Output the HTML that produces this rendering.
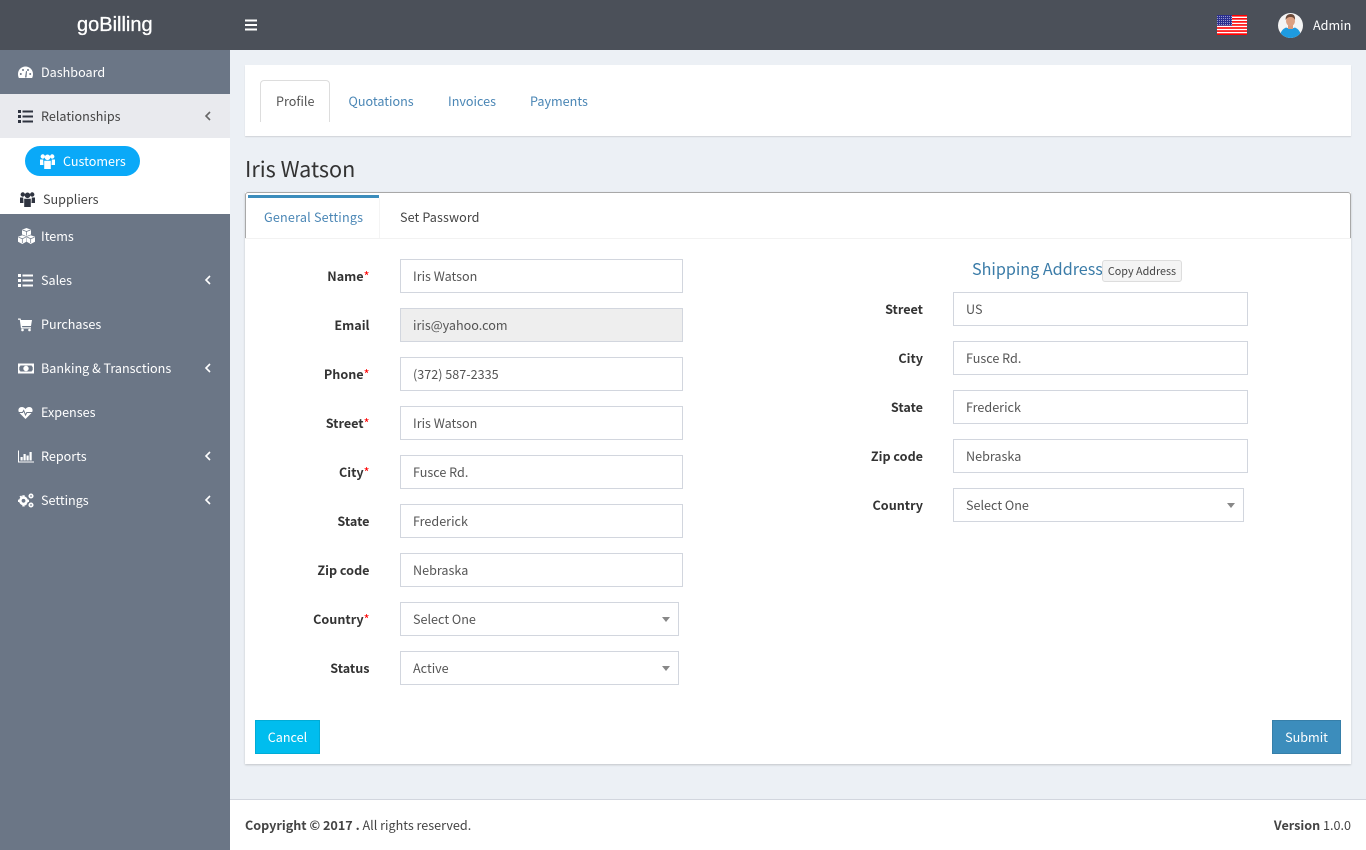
<!DOCTYPE html>
<html><head><meta charset="utf-8"><title>goBilling</title>
<style>
*{box-sizing:border-box}
html,body{margin:0;padding:0;width:1366px;height:850px;overflow:hidden;background:#ecf0f5}
body{position:relative;font-family:"Noto Sans CJK JP","Liberation Sans",sans-serif;font-size:12.6px;color:#333}
.a{position:absolute}
.t{position:absolute;white-space:nowrap;line-height:20px;height:20px}
.nav{position:absolute;left:41px;color:#fff;white-space:nowrap;line-height:20px;font-size:12.6px}
.ic{position:absolute;left:18px;width:15px;height:15px;fill:#fff}
.ch{position:absolute;left:204px;width:8px;height:10px;fill:none;stroke:#fff;stroke-width:1.6}
.lbl{position:absolute;text-align:right;font-weight:700;line-height:20px;white-space:nowrap;color:#333}
.lbl i{color:#f00;font-style:normal;font-weight:400}
.in{position:absolute;height:34px;border:1px solid #d2d6de;background:#fff;line-height:32px;padding-left:12px;color:#555;white-space:nowrap}
.ar{position:absolute;right:8px;top:14px;width:0;height:0;border-left:4px solid transparent;border-right:4px solid transparent;border-top:5px solid #888}
</style></head><body>

<!-- header -->
<div class="a" style="left:0;top:0;width:1366px;height:50px;background:#4b5059"></div>
<div class="t" style="left:77px;top:13px;height:24px;font:20px/24px 'Liberation Sans',sans-serif;color:#fff;-webkit-text-stroke:.3px #fff">goBilling</div>
<svg class="a" style="left:245px;top:19px" width="12" height="12"><path d="M0 1.500h12M0 6h12M0 10.500h12" stroke="#fff" stroke-width="2"/></svg>

<!-- flag -->
<svg class="a" style="left:1217px;top:15px" width="30" height="20" viewBox="0 0 30 20">
<rect width="30" height="20" fill="#fff"/>
<g fill="#f00"><rect width="30" height="1.600"/><rect y="3.050" width="30" height="1.600"/><rect y="6.100" width="30" height="1.600"/><rect y="9.150" width="30" height="1.600"/><rect y="12.200" width="30" height="1.600"/><rect y="15.250" width="30" height="1.600"/><rect y="18.300" width="30" height="1.700"/></g>
<rect width="15" height="10.700" fill="#2a2f8f"/>
<g stroke="#b9bce0" stroke-width=".8" stroke-dasharray="1 1"><path d="M0 1.500h15M0 3.500h15M0 5.500h15M0 7.500h15M0 9.500h15"/></g>
</svg>
<!-- avatar -->
<svg class="a" style="left:1278px;top:13px" width="25" height="25" viewBox="0 0 25 25">
<defs><clipPath id="c"><circle cx="12.500" cy="12.500" r="12.500"/></clipPath></defs>
<g clip-path="url(#c)"><rect width="25" height="25" fill="#f4f4f4"/>
<path d="M2 25c0-7 3-9 6-10.500l4.500 1.500 4.500-1.500c3 1.500 6 3.500 6 10.500z" fill="#1e9be0"/>
<rect x="10" y="11" width="5" height="5" fill="#d99a7c"/>
<ellipse cx="12.500" cy="8" rx="4.500" ry="5.200" fill="#dca082"/>
<path d="M7.700 7c-.5-4 2-6 5-6s4.800 2 4.300 6c-1-2-2-3-4.500-3S8.700 5 7.700 7z" fill="#6b4a3a"/></g>
</svg>
<div class="t" style="left:1313px;top:15px;color:#fff">Admin</div>

<!-- sidebar -->
<div class="a" style="left:0;top:50px;width:230px;height:800px;background:#6b7686"></div>
<div class="a" style="left:0;top:94px;width:230px;height:44px;background:#e9eaee"></div>
<div class="a" style="left:0;top:138px;width:230px;height:76px;background:#fff"></div>
<div class="a" style="left:25px;top:146px;width:115px;height:30px;border-radius:15px;background:#0aa9f8"></div>

<svg class="ic" style="top:65px" viewBox="0 0 15 15"><path d="M7.500 1.500C3.400 1.500 0 4.800 0 9c0 1.500.3 2.800.9 4h13.200c.6-1.200.9-2.500.9-4 0-4.200-3.400-7.500-7.500-7.500z"/><g fill="#6b7686"><circle cx="2.800" cy="9" r="1"/><circle cx="5" cy="5" r="1"/><circle cx="12.200" cy="9" r="1"/><circle cx="10" cy="5" r="1"/><path d="M7 12.500L8 6l1 .3-.5 6.200z"/></g></svg>
<div class="nav" style="top:62px">Dashboard</div>

<svg class="ic" style="top:109px;fill:#2f3440" viewBox="0 0 15 15"><path d="M0 1h3v3H0zM0 6h3v3H0zM0 11h3v3H0zM4.500 1.500H15v2H4.500zM4.500 6.500H15v2H4.500zM4.500 11.500H15v2H4.500z"/></svg>
<div class="nav" style="top:106px;color:#444">Relationships</div>
<svg class="ch" style="top:111px;stroke:#666" viewBox="0 0 8 10"><path d="M6 1L2 5l4 4"/></svg>

<svg class="a" style="left:40px;top:154px;fill:#fff" width="15" height="15" viewBox="0 0 15 15"><circle cx="2.800" cy="2.500" r="2.200"/><circle cx="12.200" cy="2.500" r="2.200"/><circle cx="7.500" cy="3.300" r="2.800"/><path d="M0 5.500h3.200L3.500 11H0zM15 5.500h-3.200l-.3 5.500H15zM4.200 6.800h6.600V15H4.200z"/></svg>
<div class="nav" style="left:63px;top:151px">Customers</div>

<svg class="a" style="left:20px;top:192px;fill:#2f3440" width="15" height="15" viewBox="0 0 15 15"><circle cx="2.800" cy="2.500" r="2.200"/><circle cx="12.200" cy="2.500" r="2.200"/><circle cx="7.500" cy="3.300" r="2.800"/><path d="M0 5.500h3.200L3.500 11H0zM15 5.500h-3.200l-.3 5.500H15zM4.200 6.800h6.600V15H4.200z"/></svg>
<div class="nav" style="left:43px;top:189px;color:#444">Suppliers</div>

<svg class="ic" style="top:228px;width:17px;height:16px" viewBox="0 0 17 16"><path d="M8.500 0l4.500 1.700v4.800l-4.500 1.700-4.500-1.700V1.700zM4.300 7.200l4 1.600v5l-4 2.200L0 13.800v-5zM12.700 7.200l4.300 1.600v5L12.700 16l-4-2.200v-5z"/><path d="M4.500 2l4 1.500 4-1.500M.5 9.200l3.800 1.500 3.500-1.500M9.200 9.200l3.500 1.500 3.800-1.500M8.500 3.500v4M4.300 10.700V15M12.700 10.700V15" stroke="#6b7686" fill="none" stroke-width=".7"/></svg>
<div class="nav" style="top:226px">Items</div>

<svg class="ic" style="top:273px" viewBox="0 0 15 15"><path d="M0 1h3v3H0zM0 6h3v3H0zM0 11h3v3H0zM4.500 1.500H15v2H4.500zM4.500 6.500H15v2H4.500zM4.500 11.500H15v2H4.500z"/></svg>
<div class="nav" style="top:270px">Sales</div>
<svg class="ch" style="top:275px" viewBox="0 0 8 10"><path d="M6 1L2 5l4 4"/></svg>

<svg class="ic" style="top:317px;width:14px" viewBox="0 0 14 15"><path d="M0 1.500h2.500l.5 1.500h11l-1 6H4l.3 1.300h8.700v1.200H3L1.800 2.700H0z"/><circle cx="4.500" cy="13" r="1.300"/><circle cx="11.500" cy="13" r="1.300"/></svg>
<div class="nav" style="top:314px">Purchases</div>

<svg class="ic" style="top:361px;width:16px" viewBox="0 0 16 15"><path fill-rule="evenodd" d="M0 2.500h16v10H0zM2.300 4.500c0 .8-.5 1.300-1 1.300v3.400c.5 0 1 .5 1 1.300h11.400c0-.8.500-1.300 1-1.300V5.800c-.5 0-1-.5-1-1.300zM8 4.800a2.700 2.700 0 1 1 0 5.400 2.700 2.700 0 0 1 0-5.400z"/></svg>
<div class="nav" style="top:358px">Banking &amp; Transctions</div>
<svg class="ch" style="top:363px" viewBox="0 0 8 10"><path d="M6 1L2 5l4 4"/></svg>

<svg class="ic" style="top:405px" viewBox="0 0 15 15"><path d="M7.500 14L1.500 8C-.5 5.800.3 2 3.800 2 5.500 2 6.700 3 7.500 4 8.300 3 9.500 2 11.200 2c3.500 0 4.300 3.800 2.300 6z"/><path d="M0 7.500h4.500l1.200-2 1.800 4.500 1.300-2.500H15" stroke="#6b7686" fill="none" stroke-width="1"/></svg>
<div class="nav" style="top:402px">Expenses</div>

<svg class="ic" style="top:449px;width:16px" viewBox="0 0 16 15"><path d="M0 1.500h1v11h15v1H0zM2.500 8h2.200v3.500H2.500zM5.500 5h2.200v6.500H5.500zM8.500 6.500h2.200v5H8.500zM11.500 3h2.200v8.500h-2.200z"/></svg>
<div class="nav" style="top:446px">Reports</div>
<svg class="ch" style="top:451px" viewBox="0 0 8 10"><path d="M6 1L2 5l4 4"/></svg>

<svg class="ic" style="top:493px;width:16px" viewBox="0 0 16 15"><circle cx="5.500" cy="7.800" r="3.200" fill="none" stroke="#fff" stroke-width="2.600"/><path d="M4.300 2.300h2.400v2H4.300zM4.300 11.300h2.400v2.200H4.300zM0 6.600h2v2.400H0zM9 6.600h2v2.400H9zM1.500 3.500l1.700-1 1.200 1.700-1.700 1zM8.800 11.500l-1.700 1-1-1.700 1.700-1z"/><circle cx="13" cy="3" r="1.700" fill="none" stroke="#fff" stroke-width="1.700"/><circle cx="13" cy="12" r="1.700" fill="none" stroke="#fff" stroke-width="1.700"/></svg>
<div class="nav" style="top:490px">Settings</div>
<svg class="ch" style="top:495px" viewBox="0 0 8 10"><path d="M6 1L2 5l4 4"/></svg>

<!-- top card -->
<div class="a" style="left:245px;top:65px;width:1106px;height:71px;background:#fff;box-shadow:0 1px 1px rgba(0,0,0,.12)"></div>
<div class="a" style="left:260px;top:80px;width:70px;height:42px;background:#fff;border:1px solid #ddd;border-bottom:0;border-radius:4px 4px 0 0"></div>
<div class="t" style="left:276px;top:91px;color:#555">Profile</div>
<div class="t" style="left:348.500px;top:91px;color:#4a86b5">Quotations</div>
<div class="t" style="left:448px;top:91px;color:#4a86b5">Invoices</div>
<div class="t" style="left:530px;top:91px;color:#4a86b5">Payments</div>

<div class="t" style="left:245px;top:155px;height:28px;line-height:28px;font-size:21.600px;color:#333">Iris Watson</div>

<!-- main card -->
<div class="a" style="left:245px;top:192px;width:1106px;height:572px;background:#fff;box-shadow:0 1px 2px rgba(0,0,0,.18)"></div>
<div class="a" style="left:245px;top:192px;width:1106px;height:47px;border:1px solid #a8a8a8;border-bottom:0;border-radius:3px 3px 0 0;background:#fff"></div>
<div class="a" style="left:245px;top:238px;width:1106px;height:1px;background:#f2f2f2"></div>
<div class="a" style="left:248px;top:195px;width:131px;height:3px;background:#3c8dbc"></div>
<div class="a" style="left:379px;top:198px;width:1px;height:40px;background:#f4f4f4"></div>
<div class="t" style="left:264px;top:207px;color:#4a86b5;letter-spacing:.2px">General Settings</div>
<div class="t" style="left:400px;top:207px;color:#444;letter-spacing:.1px">Set Password</div>

<!-- left form -->
<div class="lbl" style="right:996.500px;top:266px">Name<i>*</i></div>
<div class="in" style="left:400px;top:259px;width:283px">Iris Watson</div>
<div class="lbl" style="right:996.500px;top:315px">Email</div>
<div class="in" style="left:400px;top:308px;width:283px;background:#eee">iris@yahoo.com</div>
<div class="lbl" style="right:996.500px;top:364px">Phone<i>*</i></div>
<div class="in" style="left:400px;top:357px;width:283px">(372) 587-2335</div>
<div class="lbl" style="right:996.500px;top:413px">Street<i>*</i></div>
<div class="in" style="left:400px;top:406px;width:283px">Iris Watson</div>
<div class="lbl" style="right:996.500px;top:462px">City<i>*</i></div>
<div class="in" style="left:400px;top:455px;width:283px">Fusce Rd.</div>
<div class="lbl" style="right:996.500px;top:511px">State</div>
<div class="in" style="left:400px;top:504px;width:283px">Frederick</div>
<div class="lbl" style="right:996.500px;top:560px">Zip code</div>
<div class="in" style="left:400px;top:553px;width:283px">Nebraska</div>
<div class="lbl" style="right:996.500px;top:609px">Country<i>*</i></div>
<div class="in" style="left:400px;top:602px;width:279px">Select One<span class="ar"></span></div>
<div class="lbl" style="right:996.500px;top:658px">Status</div>
<div class="in" style="left:400px;top:651px;width:279px">Active<span class="ar"></span></div>

<!-- right form -->
<div class="t" style="left:972px;top:257px;height:22px;line-height:22px;font-size:16.150px;color:#3b7ca8">Shipping Address</div>
<div class="a" style="left:1102px;top:260px;width:80px;height:22px;background:#f4f4f4;border:1px solid #ddd;border-radius:3px;font-size:10.800px;line-height:20px;text-align:center;color:#444;white-space:nowrap">Copy Address</div>
<div class="lbl" style="right:443px;top:299px">Street</div>
<div class="in" style="left:953px;top:292px;width:295px">US</div>
<div class="lbl" style="right:443px;top:348px">City</div>
<div class="in" style="left:953px;top:341px;width:295px">Fusce Rd.</div>
<div class="lbl" style="right:443px;top:397px">State</div>
<div class="in" style="left:953px;top:390px;width:295px">Frederick</div>
<div class="lbl" style="right:443px;top:446px">Zip code</div>
<div class="in" style="left:953px;top:439px;width:295px">Nebraska</div>
<div class="lbl" style="right:443px;top:495px">Country</div>
<div class="in" style="left:953px;top:488px;width:291px">Select One<span class="ar"></span></div>

<!-- buttons -->
<div class="a" style="left:255px;top:720px;width:65px;height:34px;background:#00bdee;border:1px solid #00acd6;color:#fff;text-align:center;line-height:32px">Cancel</div>
<div class="a" style="left:1272px;top:720px;width:69px;height:34px;background:#3c8dbc;border:1px solid #367fa9;color:#fff;text-align:center;line-height:32px">Submit</div>

<!-- footer -->
<div class="a" style="left:230px;top:799px;width:1136px;height:51px;background:#fff;border-top:1px solid #d2d6de"></div>
<div class="t" style="left:245px;top:815px;color:#444"><b>Copyright © 2017 .</b> All rights reserved.</div>
<div class="t" style="right:15px;top:815px;color:#444"><b>Version</b> 1.0.0</div>

</body></html>
